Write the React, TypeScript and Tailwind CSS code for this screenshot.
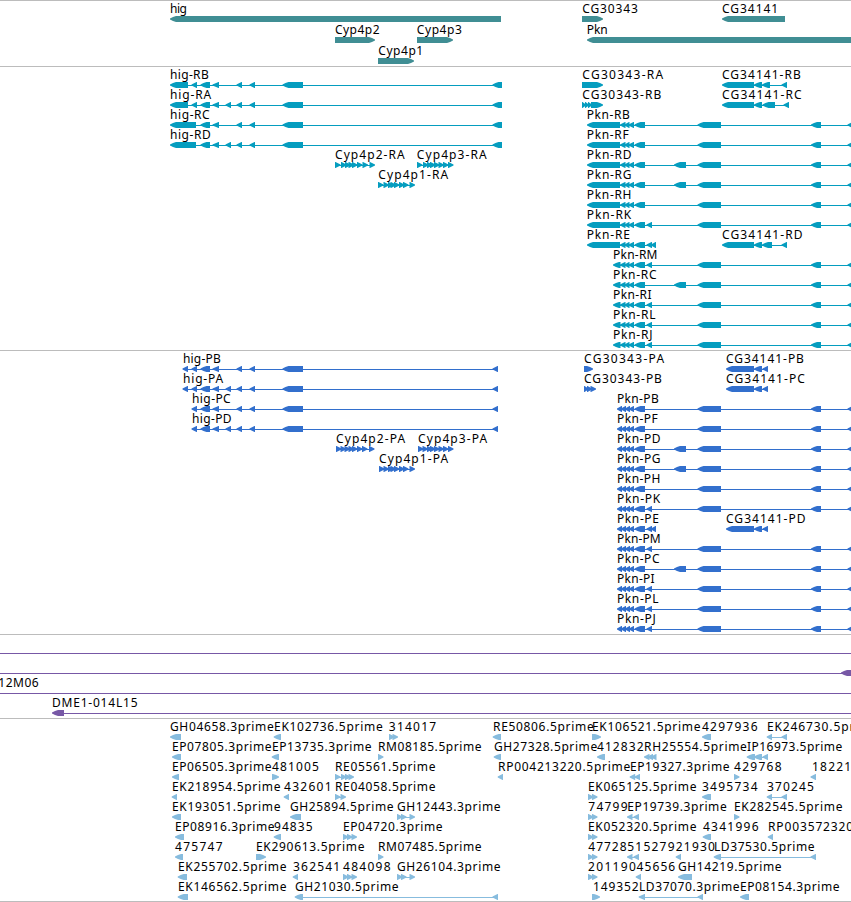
type Block = [number, number];

type Feature = {
  row: number;
  name?: string;
  // left and right edge of the label
  label?: Block;
  forward?: boolean;
  blocks: Block[];
  line?: Block;
};

type TrackProps = {
  features: Feature[];
  color: string;
  height: number;
  rowHeight?: number;
};

const WIDTH = 851;
const HEAD = 6;

function f(row: number, name: string, from: number, to: number, blocks: Block[], forward = false): Feature {
  return { row, name, label: [from, to], blocks, forward };
}

// run of short exons that all have the same width
function run(starts: number[], width = 5.5): Block[] {
  return starts.map((s) => [s, s + width]);
}

const genes: Feature[] = [
  f(0, 'hig', 170.7, 186.7, [[170, 501]]),
  f(0, 'CG30343', 583, 637.7, [[582, 603]], true),
  f(0, 'CG34141', 722.7, 778, [[722, 785]]),
  f(1, 'Cyp4p2', 335.7, 379.3, [[335, 375]], true),
  f(1, 'Cyp4p3', 417.5, 461.7, [[417, 453]], true),
  f(1, 'Pkn', 587.5, 607.5, [[587, 870]]),
  f(2, 'Cyp4p1', 379, 423, [[378, 414]], true),
];

const higMid: Block[] = [[200.5, 210], [212.5, 219]];
const higExtra: Block[] = [[225.5, 231]];
const higTail: Block[] = [[236.5, 242], [249.5, 255], [282.5, 303]];
const higEnd: Block[] = [[492.5, 502]];
const higCds: Block[] = [[492.5, 498]];

const pknSmall: Block[] = [[620, 625.5], [624.5, 629.5], [628.5, 634], [634.5, 645]];
const pknFar: Block[] = [[697.5, 721], [811, 821], [847.5, 858]];
const pknUtr: Block[] = [[587, 620], ...pknSmall];
const pknMid: Block[] = [[613, 620.5], ...pknSmall];
const pknCds: Block[] = [[617, 622], [621, 626], [625, 630], [629, 634], [634.5, 645]];
const exonD: Block[] = [[674, 686]];
const exonK: Block[] = [[646.5, 652]];
const exonE: Block[] = [[646.5, 652], [651, 656]];

const transcripts: Feature[] = [
  f(0, 'hig-RB', 170.7, 208.5, [[170, 188], [191.5, 197], ...higMid, ...higTail, ...higEnd]),
  f(1, 'hig-RA', 170.7, 211, [[170, 188], [191.5, 197], ...higMid, ...higExtra, ...higTail, ...higEnd]),
  f(2, 'hig-RC', 170.7, 209.5, [[170, 196], ...higMid, ...higTail, ...higEnd]),
  f(3, 'hig-RD', 170.7, 210.5, [[170, 196], ...higMid, ...higExtra, ...higTail, ...higEnd]),
  f(4, 'Cyp4p2-RA', 335.7, 404.5, run([335, 341, 345, 348.5, 352, 357, 362.5, 369.5]), true),
  f(4, 'Cyp4p3-RA', 417.5, 486.5, run([417, 423, 427, 430, 434, 438.5, 443, 448]), true),
  f(5, 'Cyp4p1-RA', 379, 448, run([378, 383.5, 388, 390.5, 394, 399, 403, 409.5]), true),
  f(0, 'CG30343-RA', 583, 663, [[582, 603]], true),
  f(1, 'CG30343-RB', 583, 661, [[582, 586], [585, 589], [588, 592], [591, 603]], true),
  f(0, 'CG34141-RB', 722.7, 800.5, [[722, 754], [754, 762], [762, 770], [781.5, 787]]),
  f(1, 'CG34141-RC', 722.7, 801.5, [[722, 754], [754, 762], [762.5, 775], [783.5, 789]]),
  f(8, 'CG34141-RD', 722.7, 802.3, [[722, 754], [754, 762], [762, 772], [781.5, 787]]),
  f(2, 'Pkn-RB', 587.5, 629.5, [...pknUtr, ...pknFar]),
  f(3, 'Pkn-RF', 587.5, 628.5, [...pknUtr, ...pknFar]),
  f(4, 'Pkn-RD', 587.5, 631.3, [...pknUtr, ...exonD, ...pknFar]),
  f(5, 'Pkn-RG', 587.5, 631.3, [...pknUtr, ...exonD, ...pknFar]),
  f(6, 'Pkn-RH', 587.5, 631.3, [...pknUtr, ...pknFar]),
  f(7, 'Pkn-RK', 587.5, 631, [...pknUtr, ...exonK, ...pknFar]),
  f(8, 'Pkn-RE', 587.5, 629.7, [...pknUtr, ...exonE]),
  f(9, 'Pkn-RM', 613.7, 657.3, [...pknMid, ...exonK, ...pknFar]),
  f(10, 'Pkn-RC', 613.7, 656.3, [...pknMid, ...exonD, ...pknFar]),
  f(11, 'Pkn-RI', 613.7, 651.3, [...pknMid, ...exonK, ...pknFar]),
  f(12, 'Pkn-RL', 613.7, 655.3, [...pknMid, ...exonK, ...pknFar]),
  f(13, 'Pkn-RJ', 613.7, 652.3, [...pknMid, ...exonK, ...pknFar]),
];

const proteins: Feature[] = [
  f(0, 'hig-PB', 183.7, 220.5, [[182.5, 188], [191.5, 197], ...higMid, ...higTail, ...higCds]),
  f(1, 'hig-PA', 183.7, 223, [[182.5, 188], [191.5, 197], ...higMid, ...higExtra, ...higTail, ...higCds]),
  f(2, 'hig-PC', 192.7, 230.5, [[191.5, 197], ...higMid, ...higTail, ...higCds]),
  f(3, 'hig-PD', 192.7, 231.3, [[191.5, 197], ...higMid, ...higExtra, ...higTail, ...higCds]),
  f(4, 'Cyp4p2-PA', 336.7, 405, run([336, 340.5, 344.5, 348.5, 352, 357, 362, 369]), true),
  f(4, 'Cyp4p3-PA', 418.7, 487, run([418, 422.5, 427, 430, 434, 438.5, 443, 448]), true),
  f(5, 'Cyp4p1-PA', 379.7, 448, run([379, 383.5, 388, 390.5, 394, 399, 403, 409.5]), true),
  f(0, 'CG30343-PA', 584.7, 664, [[584, 593]], true),
  f(1, 'CG30343-PB', 584.7, 661.7, [[584, 588.5], [587, 592], [590.5, 596]], true),
  f(0, 'CG34141-PB', 726.7, 803.7, [[726, 754], [754, 762], [762.5, 768]]),
  f(1, 'CG34141-PC', 726.7, 804.7, [[726, 754], [754, 762], [762.5, 768]]),
  f(8, 'CG34141-PD', 726.7, 805.3, [[726, 754], [754, 762], [762.5, 768]]),
  f(2, 'Pkn-PB', 617.7, 658.5, [...pknCds, ...pknFar]),
  f(3, 'Pkn-PF', 617.7, 657.5, [...pknCds, ...pknFar]),
  f(4, 'Pkn-PD', 617.7, 660.3, [...pknCds, ...exonD, ...pknFar]),
  f(5, 'Pkn-PG', 617.7, 660.3, [...pknCds, ...exonD, ...pknFar]),
  f(6, 'Pkn-PH', 617.7, 660.3, [...pknCds, ...pknFar]),
  f(7, 'Pkn-PK', 617.7, 660, [...pknCds, ...exonK, ...pknFar]),
  f(8, 'Pkn-PE', 617.7, 658.7, [...pknCds, ...exonE]),
  f(9, 'Pkn-PM', 617.7, 660.5, [...pknCds, ...exonK, ...pknFar]),
  f(10, 'Pkn-PC', 617.7, 659.3, [...pknCds, ...exonD, ...pknFar]),
  f(11, 'Pkn-PI', 617.7, 654.5, [...pknCds, ...exonK, ...pknFar]),
  f(12, 'Pkn-PL', 617.7, 658.3, [...pknCds, ...exonK, ...pknFar]),
  f(13, 'Pkn-PJ', 617.7, 655.5, [...pknCds, ...exonK, ...pknFar]),
];

const clones: Feature[] = [
  { row: 0, blocks: [], line: [0, 851] },
  { row: 1, blocks: [[841, 860]], line: [0, 851] },
  { row: 2, name: '12M06', label: [-1, 38.5], blocks: [], line: [0, 851] },
  { row: 3, name: 'DME1-014L15', label: [52.7, 137.3], blocks: [[52, 64]], line: [64, 851] },
];

const pair = run([588, 592]);
const triple = run([343, 347, 351.5]);
const spaced = run([397, 401, 409.5]);

const ests: Feature[] = [
  f(0, 'GH04658.3prime', 170.7, 273.5, [[170, 181]]),
  f(0, 'EK102736.5prime', 274.7, 382.5, [[273.7, 281]]),
  f(0, '314017', 389.5, 436, run([389, 392.5]), true),
  f(0, 'RE50806.5prime', 493.7, 593.5, [[492.7, 501]]),
  f(0, 'EK106521.5prime', 592.7, 700.3, [[592, 601]], true),
  f(0, '4297936', 702.7, 757.3, [[702, 711]]),
  f(0, 'EK246730.5prime', 767.7, 878, [[766.7, 772], [781.5, 787]]),

  f(1, 'EP07805.3prime', 172.7, 271.3, [[172, 181]]),
  f(1, 'EP13735.3prime', 272.7, 371.3, [[271.7, 279]]),
  f(1, 'RM08185.5prime', 378.7, 481.3, [[378, 383.5]], true),
  f(1, 'GH27328.5prime', 494.7, 597, [[493.7, 501]]),
  f(1, '412832', 597.7, 643.3, [[597, 605]]),
  f(1, 'RH25554.5prime', 644.7, 746.7, run([644, 647.5, 651])),
  f(1, 'IP16973.5prime', 747.7, 842, [[746.7, 755], [754, 762], [762.5, 768]]),

  f(2, 'EP06505.3prime', 172.7, 271.3, [[172, 179]]),
  f(2, '481005', 272.7, 318.7, [[272, 279]], true),
  f(2, 'RE05561.5prime', 335.7, 435.3, run([335, 341, 345, 348.5]), true),
  f(2, 'RP004213220.5prime', 498.7, 630, [[497.7, 503]]),
  f(2, 'EP19327.3prime', 630.7, 729.3, run([629.7, 634.5])),
  f(2, '429768', 734.7, 781.3, [[734, 739.5]], true),
  f(2, '18221', 812.7, 851, [[810.5, 816]]),

  f(3, 'EK218954.5prime', 172.7, 280.3, [[171.7, 177]]),
  f(3, '432601', 284.7, 331.3, [[283.7, 289]]),
  f(3, 'RE04058.5prime', 335.7, 435.3, run([335, 340.5]), true),
  f(3, 'EK065125.5prime', 588.7, 696.3, pair, true),
  f(3, '3495734', 702.7, 757.3, [[702, 711]]),
  f(3, '370245', 767.7, 813.7, [[766.7, 772], [781.5, 787]]),

  f(4, 'EK193051.5prime', 172.7, 280.3, [[172, 181]]),
  f(4, 'GH25894.5prime', 290.7, 393.3, [[290, 301]]),
  f(4, 'GH12443.3prime', 397.7, 500.3, spaced, true),
  f(4, '74799', 589, 627.3, pair, true),
  f(4, 'EP19739.3prime', 628, 726.5, run([627, 633.5])),
  f(4, 'EK282545.5prime', 734.7, 842.3, [[734, 739.5]], true),

  f(5, 'EP08916.3prime', 175.7, 274.3, [[175, 184]]),
  f(5, '94835', 274.7, 312.3, [[273.7, 281]]),
  f(5, 'EP04720.3prime', 343.7, 442.3, triple, true),
  f(5, 'EK052320.5prime', 588.7, 696.3, pair, true),
  f(5, '4341996', 703.7, 758.3, [[702.7, 711]]),
  f(5, 'RP003572320', 768.7, 853, [[767.7, 773]]),

  f(6, '475747', 175.7, 222.3, [[175, 183]]),
  f(6, 'EK290613.5prime', 256.7, 364.3, [[256, 266]], true),
  f(6, 'RM07485.5prime', 378.7, 481.3, [[378, 383.5]], true),
  f(6, '47728', 589, 626.3, pair, true),
  f(6, '515279', 628, 674.3, run([627, 633.5])),
  f(6, '21930', 676.5, 714.7, [[675.7, 681]]),
  f(6, 'LD37530.5prime', 714.7, 814.3, [[713.7, 721], [810.5, 816]]),

  f(7, 'EK255702.5prime', 178.7, 286.3, [[177.7, 187]]),
  f(7, '362541', 293.7, 340, [[292.7, 298]]),
  f(7, '484098', 343.7, 390.3, triple, true),
  f(7, 'GH26104.3prime', 397.7, 500.3, spaced, true),
  f(7, '201190', 588.7, 635.7, pair, true),
  f(7, '45656', 637.3, 675, [[635.7, 641]]),
  f(7, 'GH14219.5prime', 678.7, 781.3, [[678, 692]]),

  f(8, 'EK146562.5prime', 178.7, 286.3, [[177.7, 188]]),
  f(8, 'GH21030.5prime', 295.7, 398.3, [[294.7, 303], [492.5, 498]]),
  f(8, '149352', 593.7, 638.3, [[592, 600]], true),
  f(8, 'LD37070.3prime', 639.7, 739.3, [[638.7, 645], [697.5, 703]]),
  f(8, 'EP08154.3prime', 740.7, 839.3, [[740, 749]]),
];

// body with a slightly blunt head; blocks shorter than the head become plain triangles
function arrow([a, b]: Block, y: number, forward?: boolean) {
  const tip = forward ? b : a;
  const back = forward ? a : b;
  const dir = forward ? -1 : 1;
  const head = Math.min(HEAD, b - a - 0.5);
  const neck = tip + dir * head;

  if (b - a < 7) {
    return `M${back} ${y}H${neck}L${tip} ${y + 2.5}V${y + 3.5}L${neck} ${y + 6}H${back}Z`;
  }
  const bend = tip + dir * head * 0.5;
  return `M${back} ${y}H${neck}L${bend} ${y + 1}L${tip} ${y + 2.4}V${y + 3.4}L${bend} ${y + 5}L${neck} ${y + 6}H${back}Z`;
}

function FeatureGlyph({ feature, rowHeight }: { feature: Feature; rowHeight: number }) {
  const { row, name, label, blocks, forward } = feature;
  const y = 15 + row * rowHeight;
  const line = feature.line ?? (blocks.length > 1 ? [blocks[0][0] + 2, blocks[blocks.length - 1][1] - 2] : null);

  return (
    <g>
      {line && <rect x={line[0]} y={y + 3} width={line[1] - line[0]} height={1} shapeRendering="crispEdges" />}
      {blocks.map((block) => (
        <path key={block[0]} d={arrow(block, y, forward)} />
      ))}
      {name && label && (
        <text
          x={label[0] - 0.7}
          y={y - 3}
          textLength={label[1] - label[0] + 0.9}
          lengthAdjust="spacing"
          className="fill-black"
        >
          {name}
        </text>
      )}
    </g>
  );
}

function Track({ features, color, height, rowHeight = 20 }: TrackProps) {
  return (
    <section className="border-t border-[#bcbcbc]">
      <svg
        width={WIDTH}
        height={height}
        fill={color}
        className="block overflow-hidden font-['Noto_Sans','DejaVu_Sans',sans-serif] text-[12px]"
      >
        {features.map((feature, i) => (
          <FeatureGlyph key={i} feature={feature} rowHeight={rowHeight} />
        ))}
      </svg>
    </section>
  );
}

export default function App() {
  return (
    <main className="flex h-[902px] w-[851px] flex-col overflow-hidden border-b border-[#bcbcbc] bg-white">
      <Track features={genes} color="#408e94" height={65} rowHeight={21} />
      <Track features={transcripts} color="#059dbf" height={283} />
      <Track features={proteins} color="#326fcd" height={283} />
      <Track features={clones} color="#7758a6" height={83} />
      <Track features={ests} color="#87bcde" height={182} />
    </main>
  );
}
